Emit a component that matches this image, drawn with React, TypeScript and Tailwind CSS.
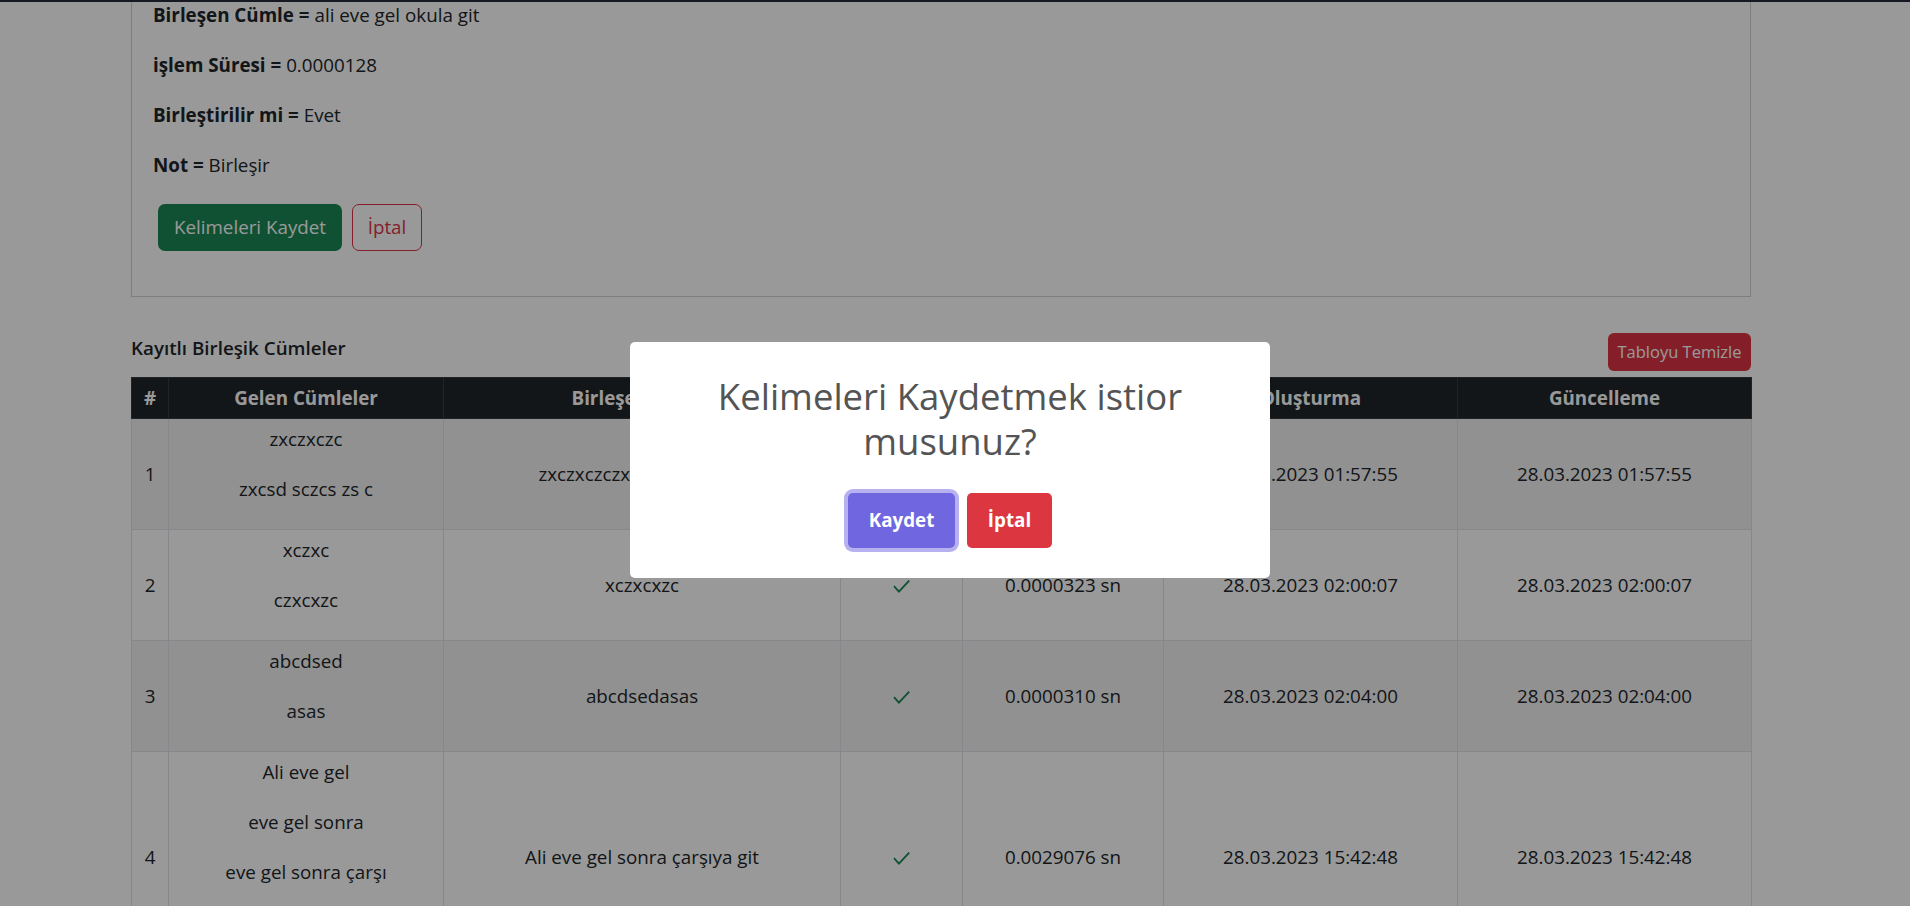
const rows = [
  {
    id: 1,
    parts: ["zxczxczc", "zxcsd sczcs zs c"],
    merged: "zxczxczczxcsd sczcs zs c",
    time: "0.0000298 sn",
    date: "28.03.2023 01:57:55",
  },
  {
    id: 2,
    parts: ["xczxc", "czxcxzc"],
    merged: "xczxcxzc",
    time: "0.0000323 sn",
    date: "28.03.2023 02:00:07",
  },
  {
    id: 3,
    parts: ["abcdsed", "asas"],
    merged: "abcdsedasas",
    time: "0.0000310 sn",
    date: "28.03.2023 02:04:00",
  },
  {
    id: 4,
    parts: ["Ali eve gel", "eve gel sonra", "eve gel sonra çarşı", "sonra çarşıya git"],
    merged: "Ali eve gel sonra çarşıya git",
    time: "0.0029076 sn",
    date: "28.03.2023 15:42:48",
  },
];

function Check() {
  return (
    <svg width="17" height="13" viewBox="0 0 17 13" className="inline-block">
      <path d="M1 6.2 L5.9 11.6 L16.2 0.6" fill="none" stroke="#198754" strokeWidth="1.8" />
    </svg>
  );
}

function Info({ label, value }: { label: string; value: string }) {
  return (
    <p className="mb-[20px] leading-[30px]">
      <b>{label} =</b> {value}
    </p>
  );
}

export default function App() {
  return (
    <div className="relative h-[906px] overflow-hidden bg-white text-[18.8px] text-[#212529] [font-family:'Open_Sans','Noto_Sans',sans-serif]">
      <div className="fixed inset-x-0 top-0 h-[2px] bg-[#252b39]" />

      <div className="ml-[131px] w-[1620px]">
        <div className="border-x border-b border-black/[0.175] pl-[21px] pb-[45px]">
          <Info label="Birleşen Cümle" value="ali eve gel okula git" />
          <Info label="işlem Süresi" value="0.0000128" />
          <Info label="Birleştirilir mi" value="Evet" />
          <Info label="Not" value="Birleşir" />
          <div className="flex gap-[10px] pt-[4px] pl-[5px]">
            <button className="h-[47px] w-[184px] rounded-[7px] bg-[#198754] text-white">
              Kelimeleri Kaydet
            </button>
            <button className="h-[47px] w-[70px] rounded-[7px] border border-[#dc3545] text-[#dc3545]">
              İptal
            </button>
          </div>
        </div>

        <div className="mt-[36px] flex items-end justify-between">
          <h6 className="mb-[11px] font-semibold leading-[24px]">Kayıtlı Birleşik Cümleler</h6>
          <button className="h-[38px] w-[143px] rounded-[6px] bg-[#dc3545] text-[16.5px] text-white">
            Tabloyu Temizle
          </button>
        </div>

        <table className="mt-[6px] w-[1620px] table-fixed border-collapse text-center leading-[30px]">
          <colgroup>
            <col className="w-[37px]" />
            <col className="w-[275px]" />
            <col className="w-[397px]" />
            <col className="w-[122px]" />
            <col className="w-[201px]" />
            <col className="w-[294px]" />
            <col className="w-[294px]" />
          </colgroup>
          <thead>
            <tr className="bg-[#212529] font-bold text-white">
              {["#", "Gelen Cümleler", "Birleşen Cümle", "Durum", "İşlem Süresi", "Oluşturma", "Güncelleme"].map(
                (h) => (
                  <th key={h} className="border border-[#373b3e] p-[5px]">
                    {h}
                  </th>
                )
              )}
            </tr>
          </thead>
          <tbody>
            {rows.map((r) => (
              <tr key={r.id} className={r.id % 2 === 1 ? "bg-black/[0.05]" : ""}>
                <td className="border border-[#dee2e6] p-[5px] align-middle">{r.id}</td>
                <td className="border border-[#dee2e6] p-[5px] align-middle">
                  {r.parts.map((p) => (
                    <p key={p} className="mb-[20px]">
                      {p}
                    </p>
                  ))}
                </td>
                <td className="border border-[#dee2e6] p-[5px] align-middle">{r.merged}</td>
                <td className="border border-[#dee2e6] p-[5px] align-middle">
                  <Check />
                </td>
                <td className="border border-[#dee2e6] p-[5px] align-middle">{r.time}</td>
                <td className="border border-[#dee2e6] p-[5px] align-middle">{r.date}</td>
                <td className="border border-[#dee2e6] p-[5px] align-middle">{r.date}</td>
              </tr>
            ))}
          </tbody>
        </table>
      </div>

      <div className="fixed inset-0 bg-black/40" />

      <div className="fixed inset-0 flex items-center justify-center pt-[14px] pr-[10px]">
        <div className="w-[640px] rounded-[5px] bg-white px-[37px] pt-[32px] pb-[30px] text-center">
          <h2 className="text-[36.5px] leading-[45px] text-[#545454]">Kelimeleri Kaydetmek istior musunuz?</h2>
          <div className="mt-[29px] flex justify-center gap-[12px]">
            <button className="h-[55px] w-[107px] rounded-[5px] bg-[#7066e0] font-bold text-white ring-[4px] ring-[#7066e0]/50">
              Kaydet
            </button>
            <button className="h-[55px] w-[85px] rounded-[5px] bg-[#dc3741] font-bold text-white">İptal</button>
          </div>
        </div>
      </div>
    </div>
  );
}
